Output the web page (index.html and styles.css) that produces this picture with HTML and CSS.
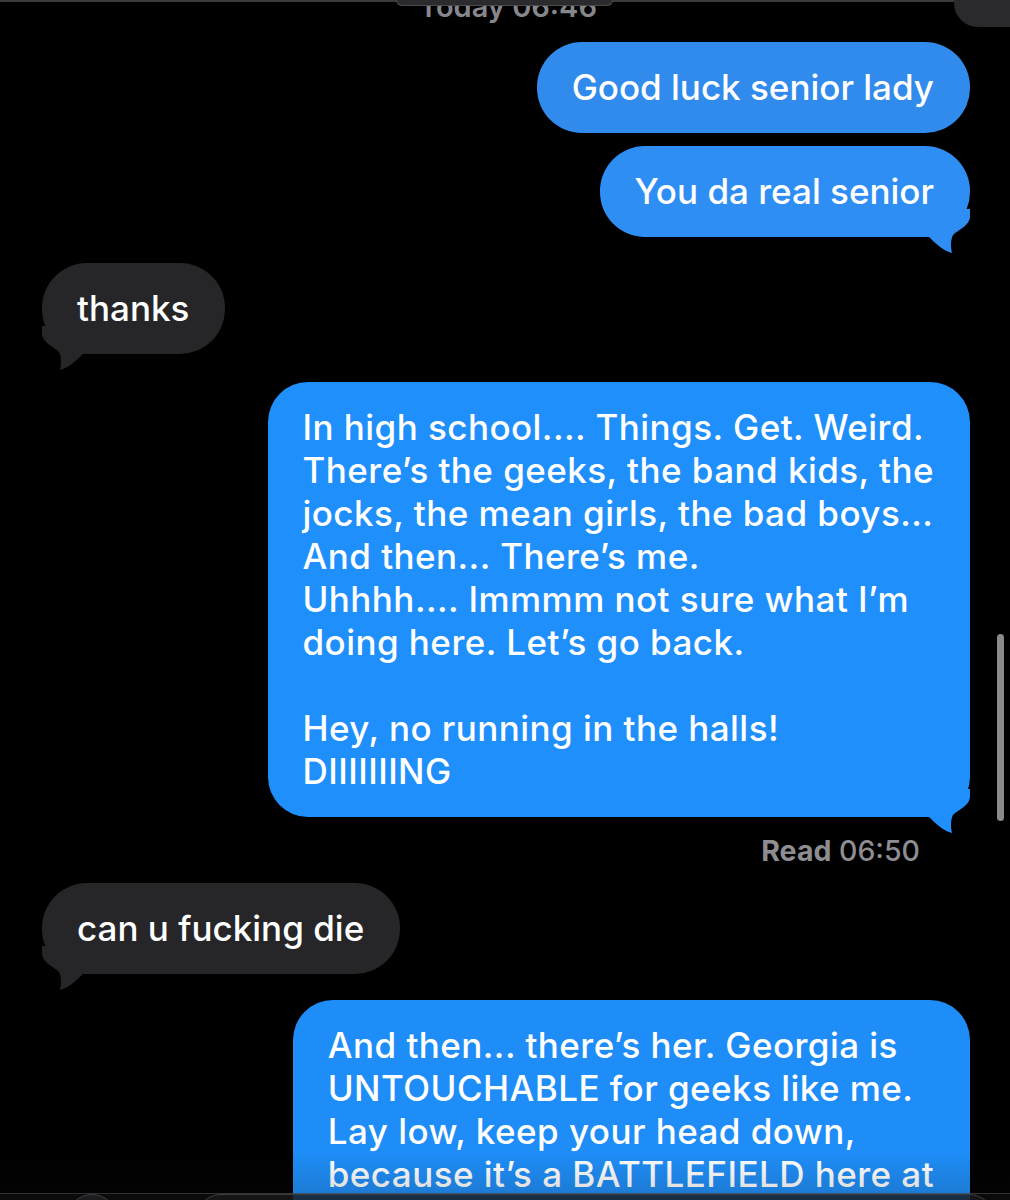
FILE: index.html
```html
<!DOCTYPE html>
<html lang="en">
<head>
<meta charset="utf-8">
<title>Messages</title>
<link rel="stylesheet" href="styles.css">
</head>
<body>
<div class="screen">
  <div class="thread">
    <div class="stamp">Today 06:46</div>

    <div class="row out first">
      <div class="bubble blue c1">Good luck senior lady</div>
    </div>
    <div class="row out tight">
      <div class="bubble blue c2">You da real senior
        <svg class="tail tail-r" viewBox="0 0 50 45" width="50" height="45"><path d="M0 0 H50 V8 C50 16 38 21 33 26 C30 32 31 39 32 44 C24 42 16 35 9 28 H0 Z"/></svg>
      </div>
    </div>

    <div class="row in gap">
      <div class="bubble grey">thanks
        <svg class="tail tail-l" viewBox="0 0 50 45" width="50" height="45"><path d="M0 0 H50 V8 C50 16 38 21 33 26 C30 32 31 39 32 44 C24 42 16 35 9 28 H0 Z"/></svg>
      </div>
    </div>

    <div class="row out gap2">
      <div class="bubble blue c3 multi">In high school.... Things. Get. Weird.<br>There’s the geeks, the band kids, the<br>jocks, the mean girls, the bad boys...<br>And then... There’s me.<br>Uhhhh.... Immmm not sure what I’m<br>doing here. Let’s go back.<br><br>Hey, no running in the halls!<br>DIIIIIIING
        <svg class="tail tail-r" viewBox="0 0 50 45" width="50" height="45"><path d="M0 0 H50 V8 C50 16 38 21 33 26 C30 32 31 39 32 44 C24 42 16 35 9 28 H0 Z"/></svg>
      </div>
    </div>

    <div class="receipt"><b>Read</b> 06:50</div>

    <div class="row in after-receipt">
      <div class="bubble grey">can u fucking die
        <svg class="tail tail-l" viewBox="0 0 50 45" width="50" height="45"><path d="M0 0 H50 V8 C50 16 38 21 33 26 C30 32 31 39 32 44 C24 42 16 35 9 28 H0 Z"/></svg>
      </div>
    </div>

    <div class="row out gap">
      <div class="bubble blue c4 multi last">And then... there’s her. Georgia is<br>UNTOUCHABLE for geeks like me.<br>Lay low, keep your head down,<br>because it’s a BATTLEFIELD here at</div>
    </div>
  </div>

  <div class="top-line"></div>
  <div class="top-pill"></div>
  <div class="top-corner"></div>
  <div class="scrollbar"></div>
  <div class="bottom-fade"></div>
  <div class="bottom-bar">
    <span class="bb-circle"></span>
    <span class="bb-pill"></span>
  </div>
</div>
</body>
</html>
```

FILE: styles.css
```css
* { box-sizing: border-box; }
html, body {
  margin: 0;
  padding: 0;
  background: #000;
}
body {
  width: 1010px;
  height: 1200px;
  overflow: hidden;
  font-family: Inter, "Noto Sans", "Liberation Sans", sans-serif;
}
.screen {
  position: relative;
  width: 1010px;
  height: 1200px;
  overflow: hidden;
  background: #000;
}
.thread {
  display: flex;
  flex-direction: column;
  padding: 0 40px 0 42px;
}
.stamp {
  margin-top: -7px;
  height: 28px;
  line-height: 28px;
  font-size: 29px;
  font-weight: 600;
  color: #87878b;
  text-align: center;
  padding-left: 4px;
}
.row {
  display: flex;
}
.row.out { justify-content: flex-end; }
.row.in { justify-content: flex-start; }
.row.first { margin-top: 21px; }
.row.tight { margin-top: 13px; }
.row.gap { margin-top: 26px; }
.row.gap2 { margin-top: 28px; }
.row.after-receipt { margin-top: 17px; }

.bubble {
  position: relative;
  padding: 24px 36px 24px 35px;
  border-radius: 45px;
  font-size: 35px;
  line-height: 43px;
  font-weight: 500;
  color: #fff;
  white-space: nowrap;
}
.bubble.blue { background: var(--bg); }
.c1 { --bg: #318bed; }
.c2 { --bg: #2f8ef3; }
.c3 { --bg: #1f8ffb; }
.c4 { --bg: #1e8df7; }
.bubble.grey { --bg: #262628; background: #262628; }
.bubble.multi { border-radius: 40px; letter-spacing: 0.45px; }
.bubble.last { padding-bottom: 80px; }

.tail {
  position: absolute;
  bottom: -17px;
  fill: var(--bg);
}
.tail-r { right: 0; }
.tail-l { left: 0; transform: scaleX(-1); }

.receipt {
  margin-top: 19px;
  align-self: flex-end;
  margin-right: 50px;
  font-size: 28.5px;
  line-height: 30px;
  color: #8d8d92;
  font-weight: 500;
}
.receipt b { font-weight: 700; }

.top-line {
  position: absolute;
  left: 0; top: 0;
  width: 100%;
  height: 2px;
  background: #3a3a3c;
}
.top-pill {
  position: absolute;
  left: 396px; top: 0;
  width: 217px;
  height: 6px;
  background: #2b2b2d;
  border: 1px solid #4a4a4c;
  border-top: none;
  border-radius: 0 0 14px 14px;
}
.top-corner {
  position: absolute;
  right: 0; top: 0;
  width: 56px;
  height: 27px;
  background: #2a2a2c;
  border-bottom-left-radius: 24px;
}
.scrollbar {
  position: absolute;
  left: 997px; top: 634px;
  width: 7px;
  height: 187px;
  border-radius: 4px;
  background: #8a8a8c;
}
.bottom-fade {
  position: absolute;
  left: 0; bottom: 7px;
  width: 100%;
  height: 40px;
  background: linear-gradient(rgba(0,0,0,0), rgba(20,20,20,0.15));
}
.bottom-bar {
  position: absolute;
  left: 0; bottom: 0;
  width: 100%;
  height: 7px;
  background: rgba(20,20,22,0.55);
  border-top: 1px solid rgba(90,90,95,0.5);
}
.bb-circle {
  position: absolute;
  left: 66px; top: 0;
  width: 52px; height: 52px;
  border-radius: 50%;
  border: 1px solid #3c3c3e;
  background: #1c1c1e;
}
.bb-pill {
  position: absolute;
  left: 195px; top: 0;
  width: 800px; height: 52px;
  border-radius: 26px;
  border: 1px solid #3c3c3e;
  background: rgba(28,28,30,0.6);
}
```
